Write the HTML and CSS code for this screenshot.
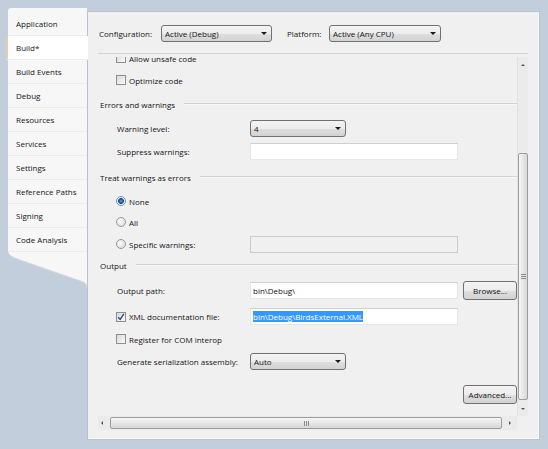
FILE: index.html
```html
<!DOCTYPE html>
<html lang="en">
<head>
    <meta charset="UTF-8">
    <title>Build</title>
    <link rel="stylesheet" href="styles.css">
</head>
<body>
    <div class="window">
        <div class="side">
            <ul class="tabs">
                <li>Application</li>
                <li class="active">Build*</li>
                <li>Build Events</li>
                <li>Debug</li>
                <li>Resources</li>
                <li>Services</li>
                <li>Settings</li>
                <li>Reference Paths</li>
                <li>Signing</li>
                <li>Code Analysis</li>
            </ul>
            <svg class="tabs-foot" width="79" height="40" viewBox="0 0 79 40">
                <path d="M0 0 H79 V36 Q79 31 74 29.5 L12 8 Q0 4 0 0 Z" fill="#f7f7f7"/>
                <path d="M0 0 Q0 4 12 8 L74 29.5 Q79 31 79 36" fill="none" stroke="#d3d9e1"/>
            </svg>
        </div>

        <div class="panel">
            <div class="toolbar">
                <span class="lbl-cfg">Configuration:</span>
                <div class="combo combo-cfg">Active (Debug)</div>
                <span class="lbl-plat">Platform:</span>
                <div class="combo combo-plat">Active (Any CPU)</div>
            </div>

            <div class="scroller">
                <div class="scroll-main">
                    <div class="viewport">
                        <div class="content">
                            <div class="row field">
                                <span class="check"></span>Allow unsafe code
                            </div>
                            <div class="row field">
                                <span class="check"></span>Optimize code
                            </div>

                            <div class="section row-26">Errors and warnings</div>
                            <div class="row row-23 field">
                                <span class="label">Warning level:</span>
                                <div class="combo combo-sm">4</div>
                            </div>
                            <div class="row row-23 field">
                                <span class="label">Suppress warnings:</span>
                                <div class="textbox"></div>
                            </div>

                            <div class="section row-28">Treat warnings as errors</div>
                            <div class="row row-20 field">
                                <span class="radio on"></span>None
                            </div>
                            <div class="row field">
                                <span class="radio"></span>All
                            </div>
                            <div class="row field">
                                <span class="label with-box"><span class="radio"></span>Specific warnings:</span>
                                <div class="textbox disabled"></div>
                            </div>

                            <div class="section row-20">Output</div>
                            <div class="row row-30 field">
                                <span class="label">Output path:</span>
                                <div class="textbox">bin\Debug\</div>
                                <div class="btn browse">Browse...</div>
                            </div>
                            <div class="row row-23 field">
                                <span class="label with-box">
                                    <span class="check">
                                        <svg width="8" height="8" viewBox="0 0 8 8"><path d="M1.2 4.2 L3.2 6.4 L6.8 0.9" fill="none" stroke="#2c4a86" stroke-width="1.4"/></svg>
                                    </span>XML documentation file:
                                </span>
                                <div class="textbox"><span class="selected">bin\Debug\BirdsExternal.XML</span></div>
                            </div>
                            <div class="row field">
                                <span class="check"></span>Register for COM interop
                            </div>
                            <div class="row row-23 field">
                                <span class="label">Generate serialization assembly:</span>
                                <div class="combo combo-sm">Auto</div>
                            </div>

                            <div class="actions">
                                <div class="btn">Advanced...</div>
                            </div>
                        </div>
                    </div>

                    <div class="vscroll">
                        <div class="arr arr-up"></div>
                        <div class="vtrack">
                            <div class="vthumb"><span class="vgrip"></span></div>
                        </div>
                        <div class="arr arr-down"></div>
                    </div>
                </div>

                <div class="hscroll-row">
                    <div class="hscroll">
                        <div class="harr harr-left"></div>
                        <div class="hthumb"><span class="hgrip"></span></div>
                        <div class="harr harr-right"></div>
                    </div>
                    <div class="corner"></div>
                </div>
            </div>
        </div>
    </div>
</body>
</html>
```

FILE: styles.css
```css
body {
    margin: 0;
    background-color: #c3cedd;
    font-family: "Open Sans", "Noto Sans", sans-serif;
    font-size: 8px;
    color: #141414;
}

.window {
    display: flex;
    align-items: flex-start;
    height: 441px;
    padding: 8px 0 0 8px;
}

/* left tab strip */
.side {
    width: 79px;
    flex-shrink: 0;
}

.tabs {
    list-style: none;
    margin: 0;
    padding: 4px 0 0;
    background-color: #f7f7f7;
    border-radius: 3px 0 0 0;
}

.tabs li {
    box-sizing: border-box;
    height: 24px;
    line-height: 23px;
    padding-left: 8px;
    border-bottom: 1px solid #ececec;
    white-space: nowrap;
}

.tabs li.active {
    position: relative;
    z-index: 1;
    margin-left: -2px;
    margin-right: -1px;
    padding-left: 8px;
    background-color: #fff;
    border-left: 2px solid #e2cda4;
}

.tabs-foot {
    display: block;
}

/* main panel */
.panel {
    box-sizing: border-box;
    width: 453px;
    height: 429px;
    margin-top: 3px;
    background-color: #f0f0f0;
    border: 1px solid #b8c2cf;
    box-shadow: inset -1px -1px 0 #fbfbfb;
}

.toolbar {
    box-sizing: border-box;
    display: flex;
    align-items: center;
    height: 42px;
    margin: 0 11px 0 10px;
    padding: 2px 0 0 1px;
    border-bottom: 1px solid #d3d3d3;
}

.lbl-cfg {
    width: 62px;
}

.lbl-plat {
    width: 42px;
    margin-left: 15px;
}

.combo {
    position: relative;
    box-sizing: border-box;
    height: 17px;
    line-height: 15px;
    padding-left: 3px;
    border: 1px solid #707070;
    border-radius: 3px;
    background: linear-gradient(#f4f4f4, #ececec 50%, #dfdfdf 51%, #d2d2d2);
}

.combo::after {
    content: "";
    position: absolute;
    right: 4px;
    top: 6px;
    border-top: 3px solid #1a1a1a;
    border-left: 3px solid transparent;
    border-right: 3px solid transparent;
}

.combo-cfg {
    width: 111px;
}

.combo-plat {
    width: 112px;
}

.combo-sm {
    width: 96px;
}

/* scrolled area */
.scroller {
    margin: 3px 11px 0 10px;
}

.scroll-main {
    display: flex;
    height: 359px;
}

.viewport {
    width: 419px;
    overflow: hidden;
}

.content {
    margin-top: -10px;
    padding-left: 2px;
}

.row {
    height: 22px;
}

.row-20 { height: 20px; }
.row-23 { height: 23px; }
.row-26 { height: 26px; }
.row-28 { height: 28px; }
.row-30 { height: 30px; }

.section {
    display: flex;
    align-items: center;
}

.section::after {
    content: "";
    flex: 1;
    margin-left: 9px;
    border-top: 1px solid #d0d0d0;
    border-bottom: 1px solid #fafafa;
}

.field {
    display: flex;
    align-items: center;
    padding-left: 16px;
    white-space: nowrap;
}

.label {
    box-sizing: border-box;
    width: 134px;
    padding-left: 1px;
}

.label.with-box {
    display: flex;
    align-items: center;
    padding-left: 0;
}

.check {
    box-sizing: border-box;
    display: flex;
    align-items: center;
    justify-content: center;
    width: 10px;
    height: 10px;
    margin-right: 3px;
    border: 1px solid #8e8f8f;
    background: linear-gradient(135deg, #d8d8d8, #fbfbfb);
}

.radio {
    box-sizing: border-box;
    width: 10px;
    height: 10px;
    margin-right: 3px;
    border: 1px solid #9a9a9a;
    border-radius: 50%;
    background: radial-gradient(circle at 40% 40%, #fbfbfb, #d6d6d6);
}

.radio.on {
    border-color: #7b8fa8;
    background: radial-gradient(circle, #5fb3f0 0, #1f63b4 1.6px, #1c4b8a 2.6px, #e6e6e6 3.2px, #fafafa 4px);
}

.textbox {
    box-sizing: border-box;
    width: 208px;
    height: 17px;
    line-height: 15px;
    padding-left: 2px;
    background-color: #fff;
    border: 1px solid #e6e6e6;
    border-top-color: #cfcfcf;
}

.textbox.disabled {
    background-color: #f0f0f0;
    border-color: #cacaca;
}

.selected {
    background-color: #3399ff;
    color: #fff;
}

.btn {
    box-sizing: border-box;
    width: 54px;
    height: 19px;
    line-height: 17px;
    text-align: center;
    border: 1px solid #707070;
    border-radius: 3px;
    background: linear-gradient(#f4f4f4, #ececec 50%, #dfdfdf 51%, #d2d2d2);
}

.browse {
    margin-left: 5px;
}

.actions {
    display: flex;
    justify-content: flex-end;
    margin-top: 12px;
}

/* vertical scrollbar */
.vscroll {
    display: flex;
    flex-direction: column;
    width: 11px;
    background-color: #ebebeb;
    border-left: 1px solid #e2e2e2;
    box-sizing: border-box;
}

.arr {
    display: flex;
    align-items: center;
    justify-content: center;
}

.arr-up {
    height: 15px;
}

.arr-down {
    height: 15px;
}

.arr-up::before,
.arr-down::before {
    content: "";
    border-left: 2px solid transparent;
    border-right: 2px solid transparent;
}

.arr-up::before {
    border-bottom: 2px solid #555;
}

.arr-down::before {
    border-top: 2px solid #555;
}

.vtrack {
    flex: 1;
}

.vthumb {
    box-sizing: border-box;
    display: flex;
    align-items: center;
    justify-content: center;
    height: 247px;
    margin-top: 81px;
    border: 1px solid #9c9c9c;
    border-radius: 2px;
    background: linear-gradient(to right, #f6f6f6, #e6e6e6 50%, #d8d8d8);
}

.vgrip {
    width: 5px;
    height: 5px;
    background: repeating-linear-gradient(#8a8a8a 0 1px, transparent 1px 2px);
}

/* horizontal scrollbar */
.hscroll-row {
    display: flex;
    height: 14px;
}

.hscroll {
    display: flex;
    align-items: center;
    width: 419px;
    background-color: #ebebeb;
}

.harr {
    display: flex;
    align-items: center;
}

.harr-left {
    width: 12px;
    padding-left: 3px;
    box-sizing: border-box;
}

.harr-right {
    width: 15px;
    padding-left: 7px;
    box-sizing: border-box;
}

.harr-left::before,
.harr-right::before {
    content: "";
    border-top: 2px solid transparent;
    border-bottom: 2px solid transparent;
}

.harr-left::before {
    border-right: 2px solid #555;
}

.harr-right::before {
    border-left: 2px solid #555;
}

.hthumb {
    box-sizing: border-box;
    display: flex;
    align-items: center;
    justify-content: center;
    width: 392px;
    height: 12px;
    border: 1px solid #9c9c9c;
    border-radius: 2px;
    background: linear-gradient(#f6f6f6, #e6e6e6 50%, #d6d6d6);
}

.hgrip {
    width: 5px;
    height: 5px;
    background: repeating-linear-gradient(to right, #8a8a8a 0 1px, transparent 1px 2px);
}

.corner {
    width: 11px;
    background-color: #f0f0f0;
}
```
